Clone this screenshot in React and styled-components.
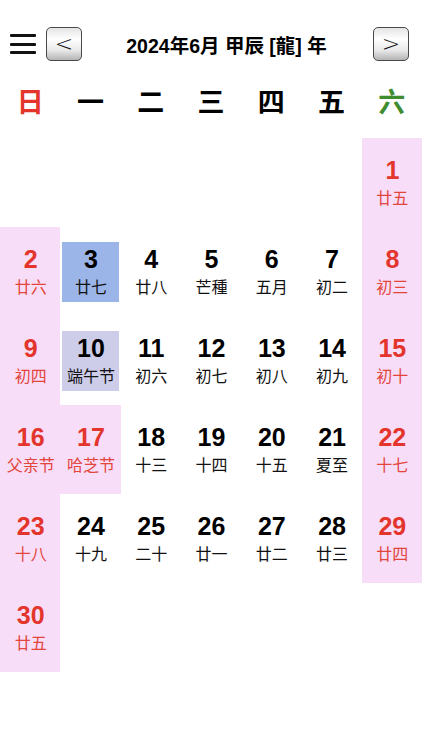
import React from "react";
import styled, { createGlobalStyle } from "styled-components";

const GlobalStyle = createGlobalStyle`
  html, body {
    margin: 0;
    padding: 0;
    background: #ffffff;
  }
  body {
    font-family: "Liberation Sans", Arial, "Noto Sans CJK SC", sans-serif;
    color: #000;
  }
`;

const RED = "#e3352c";
const PINK = "#f8ddf8";

const Page = styled.div`
  width: 422px;
  height: 750px;
  overflow: hidden;
  background: #fff;
`;

const Header = styled.div`
  height: 36px;
  padding-top: 26px;
  display: flex;
  align-items: center;
`;

const Burger = styled.button`
  width: 26px;
  height: 20px;
  margin-left: 10px;
  padding: 0;
  border: none;
  background: none;
  display: flex;
  flex-direction: column;
  justify-content: space-between;
  span {
    display: block;
    height: 3px;
    background: #111;
    border-radius: 1px;
  }
`;

const NavButton = styled.button`
  width: 36px;
  height: 34px;
  margin-left: ${(p) => p.$ml || 0}px;
  margin-right: ${(p) => p.$mr || 0}px;
  padding: 0 0 2px;
  border: 1px solid #4a4a4a;
  border-radius: 5px;
  background: linear-gradient(#e4e4e4 0%, #ffffff 35%, #e8e8e8 70%, #b4b4b4 100%);
  font-family: "DejaVu Sans", sans-serif;
  font-size: 22px;
  font-weight: 300;
  color: #111;
  display: flex;
  align-items: center;
  justify-content: center;
`;

const Title = styled.div`
  flex: 1;
  text-align: center;
  font-size: 19.5px;
  font-weight: bold;
  font-family: "Liberation Sans", Arial, "Noto Sans CJK SC", sans-serif;
  padding-right: 2px;
  white-space: nowrap;
`;

const WeekRow = styled.div`
  height: 76px;
  display: grid;
  grid-template-columns: repeat(7, 1fr);
  align-items: center;
`;

const WeekDay = styled.div`
  text-align: center;
  font-family: "Noto Sans CJK SC", sans-serif;
  font-size: 27px;
  font-weight: bold;
  color: ${(p) => p.$color};
`;

const Grid = styled.div`
  display: grid;
  grid-template-columns: repeat(7, 1fr);
  grid-auto-rows: 89px;
`;

const Cell = styled.div`
  background: ${(p) => (p.$pink ? PINK : "transparent")};
  display: flex;
  align-items: center;
  justify-content: center;
  color: ${(p) => (p.$red ? RED : "#000")};
`;

const Box = styled.div`
  width: 57px;
  height: 60px;
  margin-left: 1px;
  background: ${(p) => p.$bg || "transparent"};
  display: flex;
  flex-direction: column;
  align-items: center;
  justify-content: center;
`;

const DayNum = styled.div`
  font-family: "Liberation Sans", Arial, sans-serif;
  font-size: 25px;
  font-weight: bold;
  line-height: 28px;
  margin-top: -2px;
`;

const Lunar = styled.div`
  font-family: "Noto Sans CJK SC", sans-serif;
  font-size: 16px;
  line-height: 20px;
  margin-top: 3px;
  color: ${(p) => (p.$red ? "#e2453c" : "#111")};
  white-space: nowrap;
`;

const weekDays = [
  { t: "日", c: RED },
  { t: "一", c: "#000" },
  { t: "二", c: "#000" },
  { t: "三", c: "#000" },
  { t: "四", c: "#000" },
  { t: "五", c: "#000" },
  { t: "六", c: "#3e8c2f" },
];

const lunar = {
  1: "廿五", 2: "廿六", 3: "廿七", 4: "廿八", 5: "芒種", 6: "五月", 7: "初二",
  8: "初三", 9: "初四", 10: "端午节", 11: "初六", 12: "初七", 13: "初八", 14: "初九",
  15: "初十", 16: "父亲节", 17: "哈芝节", 18: "十三", 19: "十四", 20: "十五", 21: "夏至",
  22: "十七", 23: "十八", 24: "十九", 25: "二十", 26: "廿一", 27: "廿二", 28: "廿三",
  29: "廿四", 30: "廿五",
};

const holidays = [17];
const boxes = { 3: "#9cb5e9", 10: "#cdcdea" };

export default function App() {
  const cells = [];
  const offset = 6;
  for (let i = 0; i < 42; i++) {
    const day = i - offset + 1;
    const col = i % 7;
    if (day < 1 || day > 30) {
      cells.push(<Cell key={i} />);
      continue;
    }
    const weekend = col === 0 || col === 6;
    const red = weekend || holidays.includes(day);
    cells.push(
      <Cell key={i} $pink={red} $red={red}>
        <Box $bg={boxes[day]}>
          <DayNum>{day}</DayNum>
          <Lunar $red={red}>{lunar[day]}</Lunar>
        </Box>
      </Cell>
    );
  }

  return (
    <Page>
      <GlobalStyle />
      <Header>
        <Burger aria-label="menu">
          <span />
          <span />
          <span />
        </Burger>
        <NavButton $ml={10}>&lt;</NavButton>
        <Title>2024年6月 甲辰 [龍] 年</Title>
        <NavButton $mr={13}>&gt;</NavButton>
      </Header>
      <WeekRow>
        {weekDays.map((w) => (
          <WeekDay key={w.t} $color={w.c}>
            {w.t}
          </WeekDay>
        ))}
      </WeekRow>
      <Grid>{cells}</Grid>
    </Page>
  );
}
